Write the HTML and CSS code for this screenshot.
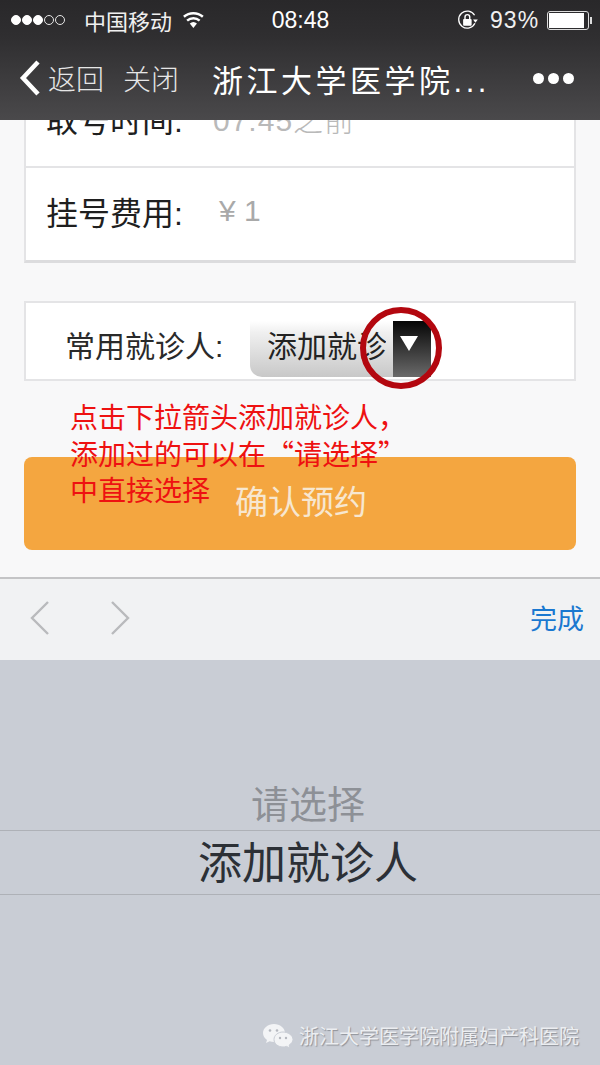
FILE: index.html
```html
<!DOCTYPE html>
<html lang="zh">
<head>
    <meta charset="UTF-8">
    <meta name="viewport" content="width=device-width, initial-scale=1.0">
    <title>浙江大学医学院</title>
    <link rel="stylesheet" href="styles.css">
</head>
<body>
    <div class="phone">
        <header class="top">
            <div class="status">
                <div class="signal">
                    <i class="on"></i><i class="on"></i><i class="on"></i><i></i><i></i>
                </div>
                <span class="carrier">中国移动</span>
                <svg class="wifi" width="24" height="18" viewBox="0 0 24 18">
                    <path d="M12 17.5 8.2 12.8a5.8 5.8 0 0 1 7.6 0z" fill="#fff"/>
                    <path d="M5.4 9.6a10 10 0 0 1 13.2 0M2 5.6a15 15 0 0 1 20 0" fill="none" stroke="#fff" stroke-width="2.6"/>
                </svg>
                <span class="time">08:48</span>
                <svg class="lock" width="24" height="24" viewBox="0 0 24 24">
                    <path d="M20 15.5A9 9 0 1 1 19.6 7" fill="none" stroke="#fff" stroke-width="1.4"/>
                    <path d="M23 11.5h-5l2.5 3.5z" fill="#fff"/>
                    <rect x="7.5" y="11" width="9" height="7" rx="1" fill="#fff"/>
                    <path d="M9.5 11V8.8a2.5 2.5 0 0 1 5 0V11" fill="none" stroke="#fff" stroke-width="1.5"/>
                </svg>
                <span class="percent">93%</span>
                <div class="battery"><div class="level"></div></div>
            </div>
            <nav class="nav">
                <svg class="back" width="22" height="36" viewBox="0 0 22 36">
                    <path d="M19 2 4 18l15 16" fill="none" stroke="#fff" stroke-width="4.5"/>
                </svg>
                <span class="nav-link">返回</span>
                <span class="nav-link close">关闭</span>
                <span class="nav-title">浙江大学医学院...</span>
                <div class="more"><i></i><i></i><i></i></div>
            </nav>
        </header>

        <main class="content">
            <section class="card info">
                <div class="row">
                    <span class="row-label">取号时间:</span>
                    <span class="row-value first">07:45之前</span>
                </div>
                <div class="row">
                    <span class="row-label">挂号费用:</span>
                    <span class="row-value">¥ 1</span>
                </div>
            </section>

            <section class="card patient">
                <span class="patient-label">常用就诊人:</span>
                <div class="select">
                    <span class="select-text">添加就诊人</span>
                    <span class="select-arrow"><i></i></span>
                </div>
            </section>

            <button class="confirm" type="button">确认预约</button>

            <div class="mark-circle"></div>
            <p class="note">点击下拉箭头添加就诊人，<br>添加过的可以在“请选择”<br>中直接选择</p>
        </main>

        <div class="toolbar">
            <svg class="prev" width="20" height="34" viewBox="0 0 20 34">
                <path d="M18 1 2 17l16 16" fill="none" stroke="#b9babc" stroke-width="2.4"/>
            </svg>
            <svg class="next" width="20" height="34" viewBox="0 0 20 34">
                <path d="M2 1l16 16L2 33" fill="none" stroke="#b9babc" stroke-width="2.4"/>
            </svg>
            <span class="done">完成</span>
        </div>

        <div class="picker">
            <div class="picker-item">请选择</div>
            <div class="picker-item active">添加就诊人</div>
            <div class="watermark">
                <svg width="32" height="26" viewBox="0 0 32 26">
                    <path d="M12 1C6 1 1 5 1 10c0 3 1.600 5.200 4 7l-1 3 3.600-1.800c1.400.5 2.900.8 4.400.8 6 0 11-4 11-9S18 1 12 1z" fill="#f3f4f6"/>
                    <path d="M21 9c-5 0-9 3.300-9 7.500s4 7.500 9 7.500c1.200 0 2.300-.2 3.400-.6L28 25l-.8-3c2.300-1.400 3.800-3.600 3.800-5.500C31 12.300 26 9 21 9z" fill="#f3f4f6" stroke="#c9cdd5" stroke-width="1"/>
                    <circle cx="8" cy="7.500" r="1.300" fill="#b5b8bf"/>
                    <circle cx="15" cy="7.500" r="1.300" fill="#b5b8bf"/>
                    <circle cx="18" cy="15" r="1.200" fill="#b5b8bf"/>
                    <circle cx="24" cy="15" r="1.200" fill="#b5b8bf"/>
                </svg>
                <span>浙江大学医学院附属妇产科医院</span>
            </div>
        </div>
    </div>
</body>
</html>
```

FILE: styles.css
```css
* {
    box-sizing: border-box;
}
html, body {
    margin: 0;
    padding: 0;
}
body {
    font-family: "Liberation Sans", "Noto Sans CJK SC", sans-serif;
    background-color: #c9cdd5;
}
i {
    display: block;
}
.phone {
    width: 600px;
    height: 1065px;
    display: flex;
    flex-direction: column;
    overflow: hidden;
}

/* top bars */
.top {
    height: 120px;
    flex: none;
    background: linear-gradient(#29282a, #2f2e30 30%, #4a494b);
    color: #fff;
    position: relative;
    z-index: 1;
}
.status {
    height: 40px;
    display: flex;
    align-items: center;
    padding: 0 11px;
    white-space: nowrap;
}
.signal {
    display: flex;
    gap: 1px;
}
.signal i {
    width: 10px;
    height: 10px;
    border-radius: 50%;
    border: 1px solid #e8e8e8;
}
.signal i.on {
    background-color: #fff;
    border-color: #fff;
}
.carrier {
    font-size: 22px;
    margin-left: 19px;
    color: #f0f0f0;
}
.wifi {
    margin-left: 10px;
}
.time {
    font-size: 23px;
    margin-left: 67px;
}
.lock {
    margin-left: 127px;
}
.percent {
    font-size: 23px;
    margin-left: 11px;
    letter-spacing: 1px;
    color: #f0f0f0;
}
.battery {
    width: 44px;
    height: 19px;
    margin-left: 8px;
    border: 1px solid #ddd;
    border-radius: 3px;
    padding: 1px;
    position: relative;
}
.battery::after {
    content: "";
    position: absolute;
    right: -4px;
    top: 5px;
    width: 2px;
    height: 7px;
    background-color: #ddd;
}
.level {
    width: 93%;
    height: 100%;
    background-color: #fff;
}
.nav {
    height: 80px;
    display: flex;
    align-items: center;
    padding: 0 26px 4px 19px;
}
.back {
    margin-right: 7px;
}
.nav-link {
    font-size: 28px;
    color: #e6e6e6;
    font-weight: 300;
}
.close {
    margin-left: 19px;
}
.nav-title {
    font-size: 31px;
    letter-spacing: 3.500px;
    margin-left: 33px;
    white-space: nowrap;
}
.more {
    margin-left: auto;
    display: flex;
    gap: 4px;
}
.more i {
    width: 11px;
    height: 11px;
    border-radius: 50%;
    background-color: #fff;
}

/* page content */
.content {
    height: 458px;
    flex: none;
    background-color: #f8f8f9;
    padding: 0 24px;
    position: relative;
    overflow: hidden;
    border-bottom: 1px solid #c4c4c6;
}
.card {
    background-color: #fff;
    border: 2px solid #e4e4e6;
}
.info {
    margin-top: -44px;
    border-top: none;
    border-bottom-width: 3px;
    border-bottom-color: #dcdcde;
}
.row {
    height: 94px;
    display: flex;
    align-items: center;
    padding: 0 20px 6px;
}
.row + .row {
    border-top: 2px solid #e4e4e6;
}
.row:first-child {
    height: 90px;
}
.row-label {
    font-size: 32px;
    color: #1f1f1f;
    width: 173px;
    white-space: nowrap;
}
.row-value {
    font-size: 30px;
    color: #a9a9a9;
    font-weight: 300;
}
.first {
    margin-left: -6px;
    color: #b9b9b9;
    letter-spacing: 1px;
}
.patient {
    margin-top: 38px;
    height: 80px;
    display: flex;
    padding: 18px 0 0 39px;
}
.patient-label {
    font-size: 30px;
    color: #2a2a2a;
    width: 185px;
    line-height: 52px;
    white-space: nowrap;
}
.select {
    width: 181px;
    height: 56px;
    display: flex;
    background: linear-gradient(#fff, #f0f0f0 20%, #c8c8c8);
    border-radius: 0 0 0 12px;
}
.select-text {
    width: 136px;
    margin-right: 7px;
    padding-left: 17px;
    overflow: hidden;
    white-space: nowrap;
    font-size: 30px;
    line-height: 52px;
    color: #222;
}
.select-arrow {
    width: 38px;
    display: flex;
    justify-content: center;
    padding: 15px 6px 0 0;
    background: linear-gradient(#050505, #6a6a6a);
}
.select-arrow i {
    width: 0;
    height: 0;
    border-left: 9px solid transparent;
    border-right: 9px solid transparent;
    border-top: 15px solid #fff;
}
.confirm {
    display: block;
    width: 100%;
    height: 93px;
    margin-top: 76px;
    border: none;
    border-radius: 8px;
    background-color: #f4a640;
    color: #f7e7d0;
    font-family: inherit;
    font-size: 33px;
    padding: 0 0 8px 2px;
}
.mark-circle {
    position: absolute;
    left: 360px;
    top: 187px;
    width: 82px;
    height: 82px;
    border: 6px solid #b3070f;
    border-radius: 50%;
}
.note {
    position: absolute;
    left: 70px;
    top: 278px;
    margin: 0;
    font-family: "Noto Sans CJK SC", sans-serif;
    font-size: 28px;
    line-height: 36.500px;
    color: #ee1111;
    white-space: nowrap;
}

/* keyboard accessory and picker */
.toolbar {
    height: 82px;
    flex: none;
    background-color: #f1f2f3;
    border-top: 1px solid #c4c4c6;
    display: flex;
    align-items: center;
    padding: 0 16px 4px 30px;
}
.next {
    margin-left: 60px;
}
.done {
    margin-left: auto;
    font-size: 27px;
    color: #1a78d0;
}
.picker {
    flex: 1;
    background-color: #c9cdd5;
    position: relative;
    padding-top: 120px;
    text-align: center;
}
.picker-item {
    height: 50px;
    font-size: 38px;
    line-height: 50px;
    color: #8d9096;
    padding-left: 16px;
}
.picker-item.active {
    height: 65px;
    border-top: 1px solid #aeb1b7;
    border-bottom: 1px solid #aeb1b7;
    font-size: 44px;
    line-height: 66px;
    color: #2c3036;
}
.watermark {
    position: absolute;
    left: 262px;
    top: 361px;
    display: flex;
    align-items: center;
    gap: 5px;
    font-size: 20px;
    color: #eceef1;
    text-shadow: 1px 1px 1px #8e9198;
    white-space: nowrap;
}
```
